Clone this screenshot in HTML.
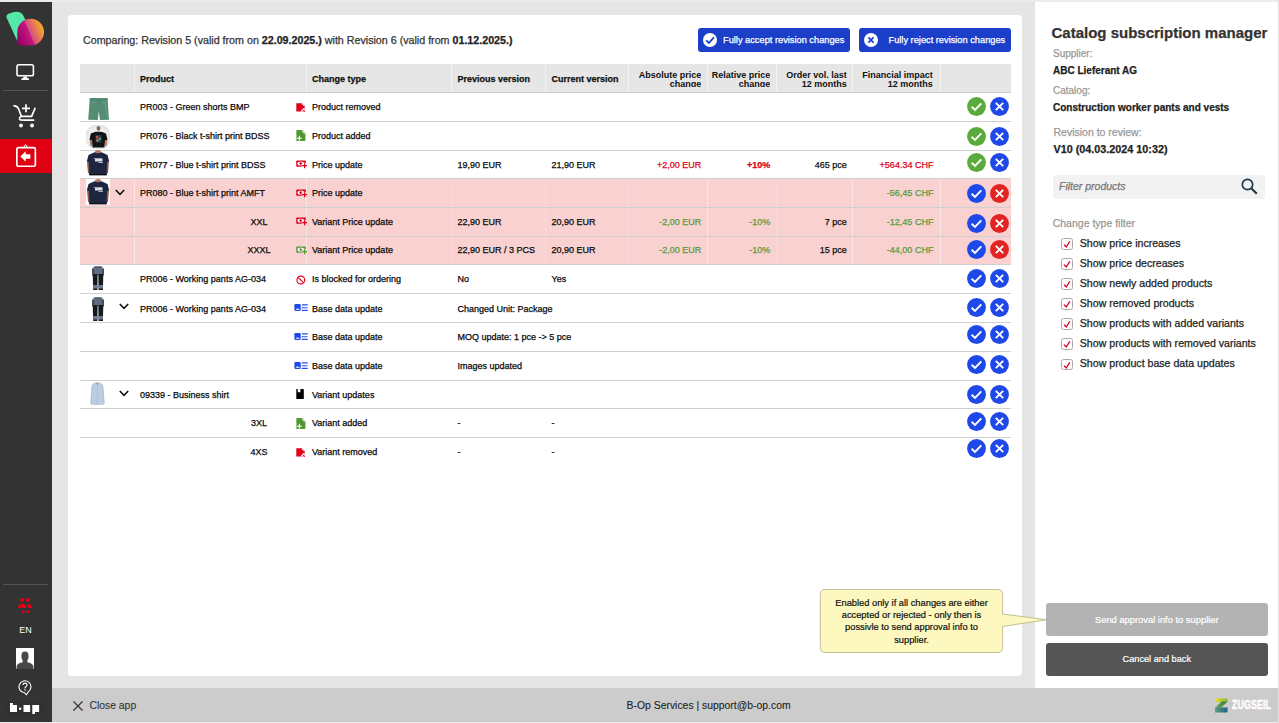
<!DOCTYPE html><html><head><meta charset="utf-8"><style>
*{box-sizing:border-box;margin:0;padding:0}
html,body{width:1279px;height:723px;overflow:hidden;background:#e5e5e5;font-family:"Liberation Sans", sans-serif;color:#222}
.a{position:absolute}
.t{position:absolute;white-space:nowrap;line-height:1;-webkit-text-stroke:0.25px currentColor}
</style></head><body><div class="a" style="left:0;top:0;width:1279px;height:2px;background:#e8ebef"></div>
<div class="a" style="left:0;top:2px;width:52px;height:720px;background:#333333"></div>
<div class="a" style="left:68px;top:15px;width:954px;height:661px;background:#fff;border-radius:4px"></div>
<div class="a" style="left:1035px;top:2px;width:243px;height:686px;background:#fff"></div>
<div class="a" style="left:52px;top:688px;width:1227px;height:34px;background:#cccccc"></div>
<div class="a" style="left:0;top:722px;width:1279px;height:1px;background:#ececec"></div>
<svg class="a" style="left:0;top:0" width="52" height="52" viewBox="0 0 52 52">
<defs><linearGradient id="lg" x1="0" y1="0.72" x2="1" y2="0.28"><stop offset="0" stop-color="#9a0066"/><stop offset="0.45" stop-color="#c4187f"/><stop offset="0.47" stop-color="#d54c84"/><stop offset="1" stop-color="#fab619"/></linearGradient></defs>
<path d="M6.5 17.5 Q6 14.5 9 13.5 L14 12 Q20 10.8 23 15 L25.5 20 L17.5 41.5 Z" fill="#52e9a9"/>
<path d="M17.3 31 A13.4 13.4 0 1 1 31 45.6 L21 45.6 Q17.3 45.6 17.3 42 Z" fill="url(#lg)"/>
</svg>
<svg class="a" style="left:15px;top:63px" width="20" height="18" viewBox="0 0 20 18">
<rect x="2" y="1.7" width="16.4" height="11" rx="1.8" fill="none" stroke="#fff" stroke-width="1.6"/>
<path d="M8.6 13.4 L11.8 13.4 L12.2 15 L14 15.5 L14 17 L6.4 17 L6.4 15.5 L8.2 15 Z" fill="#fff"/>
</svg>
<div class="a" style="left:3px;top:90px;width:45px;height:1px;background:#555"></div>
<svg class="a" style="left:13px;top:103px" width="24" height="25" viewBox="0 0 24 25">
<path d="M1 2.8 Q4.2 2.6 5.6 6 L8.4 13.3 L18.6 13.3 L22 5.4" fill="none" stroke="#fff" stroke-width="1.7" stroke-linecap="round" stroke-linejoin="round"/>
<path d="M8.4 13.3 Q6.2 14.4 6.5 16 Q6.9 17.1 8.6 17.1 L20.6 17.1" fill="none" stroke="#fff" stroke-width="1.7" stroke-linecap="round"/>
<path d="M9 5.3 L17 5.3 M13 1.3 L13 9.3" stroke="#fff" stroke-width="1.7"/>
<circle cx="8" cy="22.5" r="1.9" fill="#fff"/><circle cx="19" cy="22.5" r="1.9" fill="#fff"/>
</svg>
<div class="a" style="left:0;top:139px;width:52px;height:34px;background:#df0012"></div>
<svg class="a" style="left:15px;top:143px" width="22" height="25" viewBox="0 0 22 25">
<rect x="1.85" y="4.65" width="18.5" height="18.6" rx="1.6" fill="none" stroke="#fff" stroke-width="1.7"/>
<path d="M7.5 4.2 Q9 4 9.3 2.8 Q9.8 1.3 10.6 1.3 Q11.4 1.3 11.9 2.8 Q12.2 4 13.7 4.2 Z" fill="#fff"/>
<circle cx="10.6" cy="3.3" r="0.7" fill="#df0012"/>
<path d="M5.4 13.5 L10.7 8.2 L10.7 11.3 L15.4 11.3 L15.4 15.7 L10.7 15.7 L10.7 18.7 Z" fill="#fff"/>
</svg>
<div class="a" style="left:3px;top:584px;width:45px;height:1px;background:#555"></div>
<svg class="a" style="left:17px;top:597px" width="16" height="17" viewBox="0 0 16 17">
<circle cx="5.1" cy="3" r="2.1" fill="#e0001a"/><circle cx="10.9" cy="3" r="2.1" fill="#e0001a"/>
<path d="M1 10.9 Q1.2 6.8 5 6.8 L5.8 6.8 Q9 6.8 9.4 10.9 Z" fill="#e0001a"/>
<path d="M10.3 6.8 Q14.8 6.8 15.1 10.9 L10.9 10.9 Q10.8 8.5 10.3 6.8 Z" fill="#e0001a"/>
<path d="M6.2 14.6 L11 14.6" stroke="#e0001a" stroke-width="1.2"/>
<path d="M4.1 14.6 L6.6 12.8 L6.6 16.4 Z M13.2 14.6 L10.7 12.8 L10.7 16.4 Z" fill="#e0001a"/>
</svg>
<div class="t" style="left:19.2px;top:625.8px;font-size:9px;color:#fff;-webkit-text-stroke:0px">EN</div>
<svg class="a" style="left:16px;top:647.5px" width="18" height="21" viewBox="0 0 18 21">
<rect width="18" height="21" fill="#fff"/>
<path d="M9 3.5 Q12.6 3.5 12.6 7.8 Q12.6 11.2 11.3 12.6 L11.3 14.2 Q16 15.2 17.2 17.5 L17.6 21 L0.4 21 L0.8 17.5 Q2 15.2 6.7 14.2 L6.7 12.6 Q5.4 11.2 5.4 7.8 Q5.4 3.5 9 3.5 Z" fill="#484848"/>
</svg>
<svg class="a" style="left:0;top:696px" width="50" height="26" viewBox="0 0 50 26">
<rect x="5.5" y="5" width="38.7" height="14.5" fill="#313135"/>
<path d="M10 7 L12.9 7 L12.9 9 L17 9 L17 16 L10 16 Z" fill="#fff"/>
<circle cx="20.1" cy="12.8" r="1.25" fill="#fff"/>
<rect x="23.5" y="9" width="6.6" height="7" fill="#fff"/>
<path d="M32.3 9 L39.1 9 L39.1 16 L35 16 L35 18 L32.3 18 Z" fill="#fff"/>
</svg>
<svg class="a" style="left:17.5px;top:680px" width="15" height="16" viewBox="0 0 15 16">
<path d="M6.48 12.78 A6 6 0 1 1 10 11.99 L8.6 14.8 Z" fill="none" stroke="#fff" stroke-width="1.05" stroke-linejoin="round"/>
<path d="M5 5.1 Q5 3.1 7 3.1 Q9 3.1 9 5.1 Q9 6.2 7.8 6.8 Q7 7.2 7 8.5" fill="none" stroke="#fff" stroke-width="1.1"/>
<circle cx="7" cy="10.1" r="0.75" fill="#fff"/>
</svg>
<div class="t" style="left:83px;top:34.5px;font-size:10.7px;color:#333">Comparing: Revision 5 (valid from on <b style="color:#222">22.09.2025.)</b> with Revision 6 (valid from <b style="color:#222">01.12.2025.)</b></div>
<div class="a" style="left:698px;top:28px;width:152px;height:23.5px;background:#1b3fc9;border-radius:3px"></div>
<svg class="a" style="left:702.5px;top:32.8px" width="14" height="14" viewBox="0 0 14 14"><circle cx="7" cy="7" r="7" fill="#fff"/><path d="M3.2 7.3 L5.9 10 L10.9 4.4" fill="none" stroke="#1b3fc9" stroke-width="1.8"/></svg>
<div class="t" style="left:723px;top:36.1px;font-size:9.25px;color:#fff">Fully accept revision changes</div>
<div class="a" style="left:859px;top:28px;width:152px;height:23.5px;background:#1b3fc9;border-radius:3px"></div>
<svg class="a" style="left:863.5px;top:32.8px" width="14" height="14" viewBox="0 0 14 14"><circle cx="7" cy="7" r="7" fill="#fff"/><path d="M4.4 4.4 L9.6 9.6 M9.6 4.4 L4.4 9.6" fill="none" stroke="#1b3fc9" stroke-width="1.7"/></svg>
<div class="t" style="left:888.5px;top:36.1px;font-size:9.25px;color:#fff">Fully reject revision changes</div>
<div class="a" style="left:80px;top:64px;width:931px;height:28.5px;background:#e6e6e6"></div>
<div class="a" style="left:80px;top:92px;width:931px;height:1px;background:#cfcfcf"></div>
<div class="a" style="left:133.7px;top:64px;width:1px;height:28px;background:#f2f2f2"></div>
<div class="a" style="left:306.2px;top:64px;width:1px;height:28px;background:#f2f2f2"></div>
<div class="a" style="left:451.2px;top:64px;width:1px;height:28px;background:#f2f2f2"></div>
<div class="a" style="left:544.7px;top:64px;width:1px;height:28px;background:#f2f2f2"></div>
<div class="a" style="left:627.5px;top:64px;width:1px;height:28px;background:#f2f2f2"></div>
<div class="a" style="left:707.1px;top:64px;width:1px;height:28px;background:#f2f2f2"></div>
<div class="a" style="left:775.9px;top:64px;width:1px;height:28px;background:#f2f2f2"></div>
<div class="a" style="left:852.0px;top:64px;width:1px;height:28px;background:#f2f2f2"></div>
<div class="a" style="left:940.2px;top:64px;width:1px;height:28px;background:#f2f2f2"></div>
<div class="t" style="left:140px;top:74.8px;font-size:9px;font-weight:700;color:#111">Product</div>
<div class="t" style="left:312px;top:74.8px;font-size:9px;font-weight:700;color:#111">Change type</div>
<div class="t" style="left:457.5px;top:74.8px;font-size:9px;font-weight:700;color:#111">Previous version</div>
<div class="t" style="left:551.5px;top:74.8px;font-size:9px;font-weight:700;color:#111">Current version</div>
<div class="a" style="left:581.3px;top:70.7px;width:120px;height:16.5px;overflow:hidden;text-align:right;font-size:9px;font-weight:700;color:#111;line-height:9.6px">Absolute price<br>change</div>
<div class="a" style="left:650.2px;top:70.7px;width:120px;height:16.5px;overflow:hidden;text-align:right;font-size:9px;font-weight:700;color:#111;line-height:9.6px">Relative price<br>change</div>
<div class="a" style="left:726.7px;top:70.7px;width:120px;height:16.5px;overflow:hidden;text-align:right;font-size:9px;font-weight:700;color:#111;line-height:9.6px">Order vol. last<br>12 months</div>
<div class="a" style="left:812.8px;top:70.7px;width:120px;height:16.5px;overflow:hidden;text-align:right;font-size:9px;font-weight:700;color:#111;line-height:9.6px">Financial impact<br>12 months</div>
<div class="a" style="left:80px;top:178.6px;width:931px;height:28.7px;background:#f8d1d0"></div>
<div class="a" style="left:133.7px;top:179.6px;width:1px;height:27.7px;background:#fbe4e4"></div>
<div class="a" style="left:306.2px;top:179.6px;width:1px;height:27.7px;background:#fbe4e4"></div>
<div class="a" style="left:451.2px;top:179.6px;width:1px;height:27.7px;background:#f9dada"></div>
<div class="a" style="left:544.7px;top:179.6px;width:1px;height:27.7px;background:#f9dada"></div>
<div class="a" style="left:627.5px;top:179.6px;width:1px;height:27.7px;background:#f9dada"></div>
<div class="a" style="left:707.1px;top:179.6px;width:1px;height:27.7px;background:#fbe4e4"></div>
<div class="a" style="left:775.9px;top:179.6px;width:1px;height:27.7px;background:#f9dada"></div>
<div class="a" style="left:852.0px;top:179.6px;width:1px;height:27.7px;background:#fbe4e4"></div>
<div class="a" style="left:940.2px;top:179.6px;width:1px;height:27.7px;background:#fbe4e4"></div>
<div class="a" style="left:80px;top:207.3px;width:931px;height:28.7px;background:#f8d1d0"></div>
<div class="a" style="left:133.7px;top:208.3px;width:1px;height:27.7px;background:#fbe4e4"></div>
<div class="a" style="left:306.2px;top:208.3px;width:1px;height:27.7px;background:#fbe4e4"></div>
<div class="a" style="left:451.2px;top:208.3px;width:1px;height:27.7px;background:#f9dada"></div>
<div class="a" style="left:544.7px;top:208.3px;width:1px;height:27.7px;background:#f9dada"></div>
<div class="a" style="left:627.5px;top:208.3px;width:1px;height:27.7px;background:#f9dada"></div>
<div class="a" style="left:707.1px;top:208.3px;width:1px;height:27.7px;background:#fbe4e4"></div>
<div class="a" style="left:775.9px;top:208.3px;width:1px;height:27.7px;background:#f9dada"></div>
<div class="a" style="left:852.0px;top:208.3px;width:1px;height:27.7px;background:#fbe4e4"></div>
<div class="a" style="left:940.2px;top:208.3px;width:1px;height:27.7px;background:#fbe4e4"></div>
<div class="a" style="left:80px;top:236.0px;width:931px;height:28.5px;background:#f8d1d0"></div>
<div class="a" style="left:133.7px;top:237.0px;width:1px;height:27.5px;background:#fbe4e4"></div>
<div class="a" style="left:306.2px;top:237.0px;width:1px;height:27.5px;background:#fbe4e4"></div>
<div class="a" style="left:451.2px;top:237.0px;width:1px;height:27.5px;background:#f9dada"></div>
<div class="a" style="left:544.7px;top:237.0px;width:1px;height:27.5px;background:#f9dada"></div>
<div class="a" style="left:627.5px;top:237.0px;width:1px;height:27.5px;background:#f9dada"></div>
<div class="a" style="left:707.1px;top:237.0px;width:1px;height:27.5px;background:#fbe4e4"></div>
<div class="a" style="left:775.9px;top:237.0px;width:1px;height:27.5px;background:#f9dada"></div>
<div class="a" style="left:852.0px;top:237.0px;width:1px;height:27.5px;background:#fbe4e4"></div>
<div class="a" style="left:940.2px;top:237.0px;width:1px;height:27.5px;background:#fbe4e4"></div>
<div class="a" style="left:80px;top:120.9px;width:931px;height:1px;background:#cfcfcf"></div>
<div class="a" style="left:80px;top:149.6px;width:931px;height:1px;background:#cfcfcf"></div>
<div class="a" style="left:80px;top:178.1px;width:931px;height:1px;background:#cfcfcf"></div>
<div class="a" style="left:80px;top:206.8px;width:931px;height:1px;background:#cfcfcf"></div>
<div class="a" style="left:80px;top:235.5px;width:931px;height:1px;background:#cfcfcf"></div>
<div class="a" style="left:80px;top:264.0px;width:931px;height:1px;background:#cfcfcf"></div>
<div class="a" style="left:80px;top:293.4px;width:931px;height:1px;background:#cfcfcf"></div>
<div class="a" style="left:80px;top:322.3px;width:931px;height:1px;background:#cfcfcf"></div>
<div class="a" style="left:80px;top:350.8px;width:931px;height:1px;background:#cfcfcf"></div>
<div class="a" style="left:80px;top:379.5px;width:931px;height:1px;background:#cfcfcf"></div>
<div class="a" style="left:80px;top:408.1px;width:931px;height:1px;background:#cfcfcf"></div>
<div class="a" style="left:80px;top:437.0px;width:931px;height:1px;background:#cfcfcf"></div>
<svg class="a" style="left:88px;top:98px" width="22" height="23" viewBox="0 0 22 23"><path d="M1.8 0.3 L19.5 0.3 L21 21.8 L12 22 L10.8 13.5 L9.8 22 L0.2 21.8 Z" fill="#558c74"/><path d="M1.8 0.3 L19.5 0.3 L19.6 2.2 L1.7 2.2 Z" fill="#4e8670"/><path d="M10.6 2.2 L10.6 12" stroke="#4a8068" stroke-width="0.6"/><path d="M3 4 L7 4.5 M18 4 L14 4.5" stroke="#6ea48b" stroke-width="0.8"/><path d="M17 5 L19.5 20" stroke="#6aa088" stroke-width="1"/></svg>
<div class="t" style="left:140px;top:103.2px;font-size:9px;font-weight:400;color:#0a0a0a">PR003 - Green shorts BMP</div>
<svg class="a" style="left:296px;top:103.4px" width="10" height="10" viewBox="0 0 10 10"><path d="M0.3 0.2 L5.8 0.2 L8.8 3.2 L8.8 5.3 L7.2 5.3 L5.3 7.2 L5.3 8.6 L0.3 8.6 Z" fill="#e1001a"/><path d="M5.7 0.9 L8.2 3.4" stroke="#fff" stroke-width="0.7"/><path d="M6.6 6.6 L8.8 8.8 M8.8 6.6 L6.6 8.8" stroke="#e1001a" stroke-width="1"/></svg>
<div class="t" style="left:312px;top:103.2px;font-size:9px;font-weight:400;color:#0a0a0a">Product removed</div>
<svg class="a" style="left:967.4px;top:97.4px" width="19" height="19" viewBox="0 0 19 19"><circle cx="9.5" cy="9.5" r="9.4" fill="#5aab3c"/><path d="M4.6 9.8 L8 13 L14.3 6.3" fill="none" stroke="#fff" stroke-width="1.9"/></svg>
<svg class="a" style="left:990px;top:97.4px" width="19" height="19" viewBox="0 0 19 19"><circle cx="9.5" cy="9.5" r="9.4" fill="#1f48e8"/><path d="M5.8 5.8 L13.2 13.2 M13.2 5.8 L5.8 13.2" fill="none" stroke="#fff" stroke-width="1.9"/></svg>
<svg class="a" style="left:86px;top:124.5px" width="24" height="24" viewBox="0 0 24 24"><defs><radialGradient id="mg" cx="0.5" cy="0.5" r="0.6"><stop offset="0.5" stop-color="#f2f2f2"/><stop offset="1" stop-color="#dedede"/></radialGradient></defs><rect x="0" y="0" width="24" height="24" rx="9" fill="url(#mg)"/><ellipse cx="12.5" cy="3.6" rx="1.8" ry="2.2" fill="#8a6350"/><path d="M10.6 2.6 Q12.5 0.6 14.4 2.6 L14.2 1.8 Q12.5 0.5 10.8 1.8 Z" fill="#1a1410"/><path d="M4.8 8.5 L9.5 6.8 L15.5 6.8 L20 8.5 L21.5 14.8 L19 15.2 L18.5 22.5 L6.5 22.5 L6 15.2 L3.5 14.8 Z" fill="#121212"/><rect x="9.5" y="10" width="6" height="7.5" fill="#2a3a5a"/><rect x="10" y="11" width="2.2" height="2.5" fill="#d04a40"/><rect x="12.8" y="12.5" width="2.2" height="2.5" fill="#3a9a6a"/><rect x="10.5" y="14.5" width="2" height="2" fill="#c0a030"/><path d="M3.6 15 L4.5 21 L6 21 L6 15.2 Z M19 15.2 L19.2 21 L20.6 21 L21.4 15 Z" fill="#a87a62"/></svg>
<div class="t" style="left:140px;top:131.9px;font-size:9px;font-weight:400;color:#0a0a0a">PR076 - Black t-shirt print BDSS</div>
<svg class="a" style="left:296px;top:130.2px" width="10" height="11" viewBox="0 0 10 11"><path d="M0.4 0.5 Q0.4 0 1 0 L6 0 L9.4 3.4 L9.4 10.4 Q9.4 11 8.8 11 L1 11 Q0.4 11 0.4 10.4 Z" fill="#4f962f"/><path d="M5.8 1 L8.7 3.9" stroke="#fff" stroke-width="0.8"/><path d="M0.8 8.2 L6 8.2 M3.4 5.7 L3.4 10.8" stroke="#fff" stroke-width="1.1"/></svg>
<div class="t" style="left:312px;top:131.9px;font-size:9px;font-weight:400;color:#0a0a0a">Product added</div>
<svg class="a" style="left:967.4px;top:126.5px" width="19" height="19" viewBox="0 0 19 19"><circle cx="9.5" cy="9.5" r="9.4" fill="#5aab3c"/><path d="M4.6 9.8 L8 13 L14.3 6.3" fill="none" stroke="#fff" stroke-width="1.9"/></svg>
<svg class="a" style="left:990px;top:126.5px" width="19" height="19" viewBox="0 0 19 19"><circle cx="9.5" cy="9.5" r="9.4" fill="#1f48e8"/><path d="M5.8 5.8 L13.2 13.2 M13.2 5.8 L5.8 13.2" fill="none" stroke="#fff" stroke-width="1.9"/></svg>
<svg class="a" style="left:86px;top:149.5px" width="24" height="26" viewBox="0 0 24 26"><ellipse cx="12" cy="2" rx="3" ry="2" fill="#b07a60"/><path d="M2.5 5 L8.5 2.3 Q12 4 15.5 2.3 L21.5 5 L23.2 11.5 L21 12.3 L21 25.2 L3 25.2 L3 12.3 L0.8 11.5 Z" fill="#1d2541"/><path d="M1 11.6 L3 12.3 L3.4 23.5 L2 23 Z M23 11.6 L21 12.3 L20.6 23.5 L22 23 Z" fill="#8a5a48"/><rect x="9" y="8.3" width="7.5" height="3.2" fill="#d9dde6"/><rect x="7.5" y="8" width="1.6" height="0.8" fill="#aab"/><rect x="12.5" y="12" width="4.5" height="1" fill="#aab2c4"/><rect x="4" y="24" width="16" height="1.2" fill="#111"/></svg>
<div class="t" style="left:140px;top:160.5px;font-size:9px;font-weight:400;color:#0a0a0a">PR077 - Blue t-shirt print BDSS</div>
<svg class="a" style="left:296px;top:160.0px" width="12" height="10" viewBox="0 0 12 10"><rect x="0.3" y="0.4" width="9.6" height="6.4" rx="0.9" fill="#e1001a"/><rect x="1.6" y="1.7" width="6.4" height="3.8" rx="1.6" fill="#fff"/><circle cx="4.7" cy="3.6" r="1.3" fill="#e1001a"/><circle cx="8.6" cy="5.7" r="2.9" fill="#fff"/><path d="M6.2 5.7 L11 5.7 M8.6 3.3 L8.6 8.2" stroke="#e1001a" stroke-width="1.2"/></svg>
<div class="t" style="left:312px;top:160.5px;font-size:9px;font-weight:400;color:#0a0a0a">Price update</div>
<div class="t" style="left:457.5px;top:160.5px;font-size:9px;font-weight:400;color:#0a0a0a">19,90 EUR</div>
<div class="t" style="left:551.5px;top:160.5px;font-size:9px;font-weight:400;color:#0a0a0a">21,90 EUR</div>
<div class="t" style="left:551.2px;width:150px;text-align:right;top:160.5px;font-size:9px;font-weight:400;color:#e1001a">+2,00 EUR</div>
<div class="t" style="left:620.2px;width:150px;text-align:right;top:160.5px;font-size:9px;font-weight:700;color:#e1001a">+10%</div>
<div class="t" style="left:696.7px;width:150px;text-align:right;top:160.5px;font-size:9px;font-weight:400;color:#111">465 pce</div>
<div class="t" style="left:783.4px;width:150px;text-align:right;top:160.5px;font-size:9px;font-weight:400;color:#e1001a">+564.34 CHF</div>
<svg class="a" style="left:967.4px;top:153.3px" width="19" height="19" viewBox="0 0 19 19"><circle cx="9.5" cy="9.5" r="9.4" fill="#5aab3c"/><path d="M4.6 9.8 L8 13 L14.3 6.3" fill="none" stroke="#fff" stroke-width="1.9"/></svg>
<svg class="a" style="left:990px;top:153.3px" width="19" height="19" viewBox="0 0 19 19"><circle cx="9.5" cy="9.5" r="9.4" fill="#1f48e8"/><path d="M5.8 5.8 L13.2 13.2 M13.2 5.8 L5.8 13.2" fill="none" stroke="#fff" stroke-width="1.9"/></svg>
<svg class="a" style="left:86px;top:179.2px" width="24" height="26" viewBox="0 0 24 26"><rect x="0" y="0" width="24" height="26" fill="#fff"/><ellipse cx="12" cy="2" rx="3" ry="2" fill="#b07a60"/><path d="M2.5 5 L8.5 2.3 Q12 4 15.5 2.3 L21.5 5 L23.2 11.5 L21 12.3 L21 25.2 L3 25.2 L3 12.3 L0.8 11.5 Z" fill="#1d2541"/><path d="M1 11.6 L3 12.3 L3.4 23.5 L2 23 Z M23 11.6 L21 12.3 L20.6 23.5 L22 23 Z" fill="#8a5a48"/><rect x="9" y="8.3" width="7.5" height="3.2" fill="#d9dde6"/><rect x="7.5" y="8" width="1.6" height="0.8" fill="#aab"/><rect x="12.5" y="12" width="4.5" height="1" fill="#aab2c4"/><rect x="4" y="24" width="16" height="1.2" fill="#111"/></svg>
<svg class="a" style="left:115.0px;top:189.3px" width="10" height="7" viewBox="0 0 10 7"><path d="M0.8 1 L5 5.3 L9.2 1" fill="none" stroke="#111" stroke-width="1.6"/></svg>
<div class="t" style="left:140px;top:189.1px;font-size:9px;font-weight:400;color:#0a0a0a">PR080 - Blue t-shirt print AMFT</div>
<svg class="a" style="left:296px;top:188.6px" width="12" height="10" viewBox="0 0 12 10"><rect x="0.3" y="0.4" width="9.6" height="6.4" rx="0.9" fill="#e1001a"/><rect x="1.6" y="1.7" width="6.4" height="3.8" rx="1.6" fill="#fff"/><circle cx="4.7" cy="3.6" r="1.3" fill="#e1001a"/><circle cx="8.6" cy="5.7" r="2.9" fill="#f8d1d0"/><path d="M6.2 5.7 L11 5.7 M8.6 3.3 L8.6 8.2" stroke="#e1001a" stroke-width="1.2"/></svg>
<div class="t" style="left:312px;top:189.1px;font-size:9px;font-weight:400;color:#0a0a0a">Price update</div>
<div class="t" style="left:783.4px;width:150px;text-align:right;top:189.1px;font-size:9px;font-weight:400;color:#5a9b3b">-56,45 CHF</div>
<svg class="a" style="left:967.4px;top:183.8px" width="19" height="19" viewBox="0 0 19 19"><circle cx="9.5" cy="9.5" r="9.4" fill="#1f48e8"/><path d="M4.6 9.8 L8 13 L14.3 6.3" fill="none" stroke="#fff" stroke-width="1.9"/></svg>
<svg class="a" style="left:990px;top:183.8px" width="19" height="19" viewBox="0 0 19 19"><circle cx="9.5" cy="9.5" r="9.4" fill="#e32222"/><path d="M5.8 5.8 L13.2 13.2 M13.2 5.8 L5.8 13.2" fill="none" stroke="#fff" stroke-width="1.9"/></svg>
<div class="t" style="left:209px;width:100px;text-align:center;top:217.8px;font-size:9px;color:#0a0a0a">XXL</div>
<svg class="a" style="left:296px;top:217.3px" width="12" height="10" viewBox="0 0 12 10"><rect x="0.3" y="0.4" width="9.6" height="6.4" rx="0.9" fill="#e1001a"/><rect x="1.6" y="1.7" width="6.4" height="3.8" rx="1.6" fill="#fff"/><circle cx="4.7" cy="3.6" r="1.3" fill="#e1001a"/><circle cx="8.6" cy="5.7" r="2.9" fill="#f8d1d0"/><path d="M6.2 5.7 L11 5.7 M8.6 3.3 L8.6 8.2" stroke="#e1001a" stroke-width="1.2"/></svg>
<div class="t" style="left:312px;top:217.8px;font-size:9px;font-weight:400;color:#0a0a0a">Variant Price update</div>
<div class="t" style="left:457.5px;top:217.8px;font-size:9px;font-weight:400;color:#0a0a0a">22,90 EUR</div>
<div class="t" style="left:551.5px;top:217.8px;font-size:9px;font-weight:400;color:#0a0a0a">20,90 EUR</div>
<div class="t" style="left:551.2px;width:150px;text-align:right;top:217.8px;font-size:9px;font-weight:400;color:#5a9b3b">-2,00 EUR</div>
<div class="t" style="left:620.2px;width:150px;text-align:right;top:217.8px;font-size:9px;font-weight:400;color:#5a9b3b">-10%</div>
<div class="t" style="left:696.7px;width:150px;text-align:right;top:217.8px;font-size:9px;font-weight:400;color:#111">7 pce</div>
<div class="t" style="left:783.4px;width:150px;text-align:right;top:217.8px;font-size:9px;font-weight:400;color:#5a9b3b">-12,45 CHF</div>
<svg class="a" style="left:967.4px;top:213.8px" width="19" height="19" viewBox="0 0 19 19"><circle cx="9.5" cy="9.5" r="9.4" fill="#1f48e8"/><path d="M4.6 9.8 L8 13 L14.3 6.3" fill="none" stroke="#fff" stroke-width="1.9"/></svg>
<svg class="a" style="left:990px;top:213.8px" width="19" height="19" viewBox="0 0 19 19"><circle cx="9.5" cy="9.5" r="9.4" fill="#e32222"/><path d="M5.8 5.8 L13.2 13.2 M13.2 5.8 L5.8 13.2" fill="none" stroke="#fff" stroke-width="1.9"/></svg>
<div class="t" style="left:209px;width:100px;text-align:center;top:246.4px;font-size:9px;color:#0a0a0a">XXXL</div>
<svg class="a" style="left:296px;top:245.9px" width="12" height="10" viewBox="0 0 12 10"><rect x="0.3" y="0.4" width="9.6" height="6.4" rx="0.9" fill="#5a9b3b"/><rect x="1.6" y="1.7" width="6.4" height="3.8" rx="1.6" fill="#fff"/><circle cx="4.7" cy="3.6" r="1.3" fill="#5a9b3b"/><circle cx="8.6" cy="5.7" r="2.9" fill="#f8d1d0"/><path d="M6.2 5.7 L11 5.7 M8.6 3.3 L8.6 8.2" stroke="#5a9b3b" stroke-width="1.2"/></svg>
<div class="t" style="left:312px;top:246.4px;font-size:9px;font-weight:400;color:#0a0a0a">Variant Price update</div>
<div class="t" style="left:457.5px;top:246.4px;font-size:9px;font-weight:400;color:#0a0a0a">22,90 EUR / 3 PCS</div>
<div class="t" style="left:551.5px;top:246.4px;font-size:9px;font-weight:400;color:#0a0a0a">20,90 EUR</div>
<div class="t" style="left:551.2px;width:150px;text-align:right;top:246.4px;font-size:9px;font-weight:400;color:#5a9b3b">-2,00 EUR</div>
<div class="t" style="left:620.2px;width:150px;text-align:right;top:246.4px;font-size:9px;font-weight:400;color:#5a9b3b">-10%</div>
<div class="t" style="left:696.7px;width:150px;text-align:right;top:246.4px;font-size:9px;font-weight:400;color:#111">15 pce</div>
<div class="t" style="left:783.4px;width:150px;text-align:right;top:246.4px;font-size:9px;font-weight:400;color:#5a9b3b">-44,00 CHF</div>
<svg class="a" style="left:967.4px;top:240.0px" width="19" height="19" viewBox="0 0 19 19"><circle cx="9.5" cy="9.5" r="9.4" fill="#1f48e8"/><path d="M4.6 9.8 L8 13 L14.3 6.3" fill="none" stroke="#fff" stroke-width="1.9"/></svg>
<svg class="a" style="left:990px;top:240.0px" width="19" height="19" viewBox="0 0 19 19"><circle cx="9.5" cy="9.5" r="9.4" fill="#e32222"/><path d="M5.8 5.8 L13.2 13.2 M13.2 5.8 L5.8 13.2" fill="none" stroke="#fff" stroke-width="1.9"/></svg>
<svg class="a" style="left:91.5px;top:265.7px" width="12" height="25" viewBox="0 0 12 25"><path d="M1.5 0.5 L10.5 0.5 L11.3 9 L0.7 9 Z" fill="#5d6c82"/><path d="M0.7 8 L5.6 8 L5.4 24 L1.2 24 Z M6.3 8 L11.3 8 L10.9 24 L6.6 24 Z" fill="#16191d"/><path d="M0.1 2.5 L1.6 2.5 L1.7 9.5 L0.3 9.5 Z M10.4 2.5 L11.9 2.5 L11.8 9.5 L10.4 9.5 Z" fill="#2a2f36"/><path d="M1 19 L5.4 19 L5.4 22.6 L1.1 22.6 Z M6.6 19 L11 19 L10.9 22.6 L6.6 22.6 Z" fill="#6a7891"/><path d="M3 0.5 L9 0.5 L9 1.4 L3 1.4 Z" fill="#3c4452"/></svg>
<div class="t" style="left:140px;top:275.4px;font-size:9px;font-weight:400;color:#0a0a0a">PR006 - Working pants AG-034</div>
<svg class="a" style="left:296px;top:274.7px" width="10" height="10" viewBox="0 0 10 10"><circle cx="4.8" cy="5" r="3.9" fill="none" stroke="#e1001a" stroke-width="1.1"/><path d="M2.1 2.3 L7.5 7.7" stroke="#e1001a" stroke-width="1.1"/></svg>
<div class="t" style="left:312px;top:275.4px;font-size:9px;font-weight:400;color:#0a0a0a">Is blocked for ordering</div>
<div class="t" style="left:457.5px;top:275.4px;font-size:9px;font-weight:400;color:#0a0a0a">No</div>
<div class="t" style="left:551.5px;top:275.4px;font-size:9px;font-weight:400;color:#0a0a0a">Yes</div>
<svg class="a" style="left:967.4px;top:269.1px" width="19" height="19" viewBox="0 0 19 19"><circle cx="9.5" cy="9.5" r="9.4" fill="#1f48e8"/><path d="M4.6 9.8 L8 13 L14.3 6.3" fill="none" stroke="#fff" stroke-width="1.9"/></svg>
<svg class="a" style="left:990px;top:269.1px" width="19" height="19" viewBox="0 0 19 19"><circle cx="9.5" cy="9.5" r="9.4" fill="#1f48e8"/><path d="M5.8 5.8 L13.2 13.2 M13.2 5.8 L5.8 13.2" fill="none" stroke="#fff" stroke-width="1.9"/></svg>
<svg class="a" style="left:91.5px;top:296.9px" width="12" height="25" viewBox="0 0 12 25"><path d="M1.5 0.5 L10.5 0.5 L11.3 9 L0.7 9 Z" fill="#5d6c82"/><path d="M0.7 8 L5.6 8 L5.4 24 L1.2 24 Z M6.3 8 L11.3 8 L10.9 24 L6.6 24 Z" fill="#16191d"/><path d="M0.1 2.5 L1.6 2.5 L1.7 9.5 L0.3 9.5 Z M10.4 2.5 L11.9 2.5 L11.8 9.5 L10.4 9.5 Z" fill="#2a2f36"/><path d="M1 19 L5.4 19 L5.4 22.6 L1.1 22.6 Z M6.6 19 L11 19 L10.9 22.6 L6.6 22.6 Z" fill="#6a7891"/><path d="M3 0.5 L9 0.5 L9 1.4 L3 1.4 Z" fill="#3c4452"/></svg>
<svg class="a" style="left:119.0px;top:303.1px" width="10" height="7" viewBox="0 0 10 7"><path d="M0.8 1 L5 5.3 L9.2 1" fill="none" stroke="#111" stroke-width="1.6"/></svg>
<div class="t" style="left:140px;top:304.6px;font-size:9px;font-weight:400;color:#0a0a0a">PR006 - Working pants AG-034</div>
<svg class="a" style="left:293.5px;top:304.4px" width="14" height="8" viewBox="0 0 14 8"><rect x="0.4" y="0.1" width="6.3" height="6.8" rx="1.1" fill="#1f48e8"/><path d="M1.5 5.8 L3.2 4.2 L4.3 5 L5 4.4 L5.8 5.8 Z" fill="#fff"/><path d="M8.3 0.9 L13.3 0.9 M8.1 3.7 L13.1 3.7 M8.1 6.4 L13.3 6.4" stroke="#2350ea" stroke-width="1.1" stroke-linecap="round"/></svg>
<div class="t" style="left:312px;top:304.6px;font-size:9px;font-weight:400;color:#0a0a0a">Base data update</div>
<div class="t" style="left:457.5px;top:304.6px;font-size:9px;font-weight:400;color:#0a0a0a">Changed Unit: Package</div>
<svg class="a" style="left:967.4px;top:298.4px" width="19" height="19" viewBox="0 0 19 19"><circle cx="9.5" cy="9.5" r="9.4" fill="#1f48e8"/><path d="M4.6 9.8 L8 13 L14.3 6.3" fill="none" stroke="#fff" stroke-width="1.9"/></svg>
<svg class="a" style="left:990px;top:298.4px" width="19" height="19" viewBox="0 0 19 19"><circle cx="9.5" cy="9.5" r="9.4" fill="#1f48e8"/><path d="M5.8 5.8 L13.2 13.2 M13.2 5.8 L5.8 13.2" fill="none" stroke="#fff" stroke-width="1.9"/></svg>
<svg class="a" style="left:293.5px;top:333.1px" width="14" height="8" viewBox="0 0 14 8"><rect x="0.4" y="0.1" width="6.3" height="6.8" rx="1.1" fill="#1f48e8"/><path d="M1.5 5.8 L3.2 4.2 L4.3 5 L5 4.4 L5.8 5.8 Z" fill="#fff"/><path d="M8.3 0.9 L13.3 0.9 M8.1 3.7 L13.1 3.7 M8.1 6.4 L13.3 6.4" stroke="#2350ea" stroke-width="1.1" stroke-linecap="round"/></svg>
<div class="t" style="left:312px;top:333.2px;font-size:9px;font-weight:400;color:#0a0a0a">Base data update</div>
<div class="t" style="left:457.5px;top:333.2px;font-size:9px;font-weight:400;color:#0a0a0a">MOQ update: 1 pce -&gt; 5 pce</div>
<svg class="a" style="left:967.4px;top:324.8px" width="19" height="19" viewBox="0 0 19 19"><circle cx="9.5" cy="9.5" r="9.4" fill="#1f48e8"/><path d="M4.6 9.8 L8 13 L14.3 6.3" fill="none" stroke="#fff" stroke-width="1.9"/></svg>
<svg class="a" style="left:990px;top:324.8px" width="19" height="19" viewBox="0 0 19 19"><circle cx="9.5" cy="9.5" r="9.4" fill="#1f48e8"/><path d="M5.8 5.8 L13.2 13.2 M13.2 5.8 L5.8 13.2" fill="none" stroke="#fff" stroke-width="1.9"/></svg>
<svg class="a" style="left:293.5px;top:361.6px" width="14" height="8" viewBox="0 0 14 8"><rect x="0.4" y="0.1" width="6.3" height="6.8" rx="1.1" fill="#1f48e8"/><path d="M1.5 5.8 L3.2 4.2 L4.3 5 L5 4.4 L5.8 5.8 Z" fill="#fff"/><path d="M8.3 0.9 L13.3 0.9 M8.1 3.7 L13.1 3.7 M8.1 6.4 L13.3 6.4" stroke="#2350ea" stroke-width="1.1" stroke-linecap="round"/></svg>
<div class="t" style="left:312px;top:361.8px;font-size:9px;font-weight:400;color:#0a0a0a">Base data update</div>
<div class="t" style="left:457.5px;top:361.8px;font-size:9px;font-weight:400;color:#0a0a0a">Images updated</div>
<svg class="a" style="left:967.4px;top:355.2px" width="19" height="19" viewBox="0 0 19 19"><circle cx="9.5" cy="9.5" r="9.4" fill="#1f48e8"/><path d="M4.6 9.8 L8 13 L14.3 6.3" fill="none" stroke="#fff" stroke-width="1.9"/></svg>
<svg class="a" style="left:990px;top:355.2px" width="19" height="19" viewBox="0 0 19 19"><circle cx="9.5" cy="9.5" r="9.4" fill="#1f48e8"/><path d="M5.8 5.8 L13.2 13.2 M13.2 5.8 L5.8 13.2" fill="none" stroke="#fff" stroke-width="1.9"/></svg>
<svg class="a" style="left:90px;top:382px" width="15" height="24" viewBox="0 0 15 24"><path d="M5 0.3 L7.2 1.3 L9.6 0.3 L13 2.6 L14.8 22 L13 22.8 L12 23 L3 23 L2 22.8 L0.2 22 L1.8 2.6 Z" fill="#bccde1"/><path d="M7.3 1.5 L7.3 22.8" stroke="#a9bdd6" stroke-width="0.6"/><path d="M2.2 4 L1.2 21.5 M12.8 4 L13.8 21.5" stroke="#a5b8d0" stroke-width="0.6"/><path d="M6.6 0.5 L8 0.5 L7.6 2.6 L7 2.6 Z" fill="#c84a5a"/></svg>
<svg class="a" style="left:119.0px;top:390.3px" width="10" height="7" viewBox="0 0 10 7"><path d="M0.8 1 L5 5.3 L9.2 1" fill="none" stroke="#111" stroke-width="1.6"/></svg>
<div class="t" style="left:140px;top:390.5px;font-size:9px;font-weight:400;color:#0a0a0a">09339 - Business shirt</div>
<svg class="a" style="left:296px;top:388.5px" width="8" height="11" viewBox="0 0 8 11"><path d="M0.3 0.6 Q0.3 0.1 0.9 0.1 L1.8 0.1 L1.8 3.2 L4.4 3.2 L4.4 0.1 L7.2 0.1 Q7.8 0.1 7.8 0.7 L7.8 9.4 Q7.8 10 7.2 10 L1 10 Q0.3 10 0.3 9.4 Z" fill="#000"/></svg>
<div class="t" style="left:312px;top:390.5px;font-size:9px;font-weight:400;color:#0a0a0a">Variant updates</div>
<svg class="a" style="left:967.4px;top:385.0px" width="19" height="19" viewBox="0 0 19 19"><circle cx="9.5" cy="9.5" r="9.4" fill="#1f48e8"/><path d="M4.6 9.8 L8 13 L14.3 6.3" fill="none" stroke="#fff" stroke-width="1.9"/></svg>
<svg class="a" style="left:990px;top:385.0px" width="19" height="19" viewBox="0 0 19 19"><circle cx="9.5" cy="9.5" r="9.4" fill="#1f48e8"/><path d="M5.8 5.8 L13.2 13.2 M13.2 5.8 L5.8 13.2" fill="none" stroke="#fff" stroke-width="1.9"/></svg>
<div class="t" style="left:209px;width:100px;text-align:center;top:419.2px;font-size:9px;color:#0a0a0a">3XL</div>
<svg class="a" style="left:296px;top:417.6px" width="10" height="11" viewBox="0 0 10 11"><path d="M0.4 0.5 Q0.4 0 1 0 L6 0 L9.4 3.4 L9.4 10.4 Q9.4 11 8.8 11 L1 11 Q0.4 11 0.4 10.4 Z" fill="#4f962f"/><path d="M5.8 1 L8.7 3.9" stroke="#fff" stroke-width="0.8"/><path d="M0.8 8.2 L6 8.2 M3.4 5.7 L3.4 10.8" stroke="#fff" stroke-width="1.1"/></svg>
<div class="t" style="left:312px;top:419.2px;font-size:9px;font-weight:400;color:#0a0a0a">Variant added</div>
<div class="t" style="left:457.5px;top:419.2px;font-size:9px;font-weight:400;color:#0a0a0a">-</div>
<div class="t" style="left:551.5px;top:419.2px;font-size:9px;font-weight:400;color:#0a0a0a">-</div>
<svg class="a" style="left:967.4px;top:411.7px" width="19" height="19" viewBox="0 0 19 19"><circle cx="9.5" cy="9.5" r="9.4" fill="#1f48e8"/><path d="M4.6 9.8 L8 13 L14.3 6.3" fill="none" stroke="#fff" stroke-width="1.9"/></svg>
<svg class="a" style="left:990px;top:411.7px" width="19" height="19" viewBox="0 0 19 19"><circle cx="9.5" cy="9.5" r="9.4" fill="#1f48e8"/><path d="M5.8 5.8 L13.2 13.2 M13.2 5.8 L5.8 13.2" fill="none" stroke="#fff" stroke-width="1.9"/></svg>
<div class="t" style="left:209px;width:100px;text-align:center;top:448.1px;font-size:9px;color:#0a0a0a">4XS</div>
<svg class="a" style="left:296px;top:448.3px" width="10" height="10" viewBox="0 0 10 10"><path d="M0.3 0.2 L5.8 0.2 L8.8 3.2 L8.8 5.3 L7.2 5.3 L5.3 7.2 L5.3 8.6 L0.3 8.6 Z" fill="#e1001a"/><path d="M5.7 0.9 L8.2 3.4" stroke="#fff" stroke-width="0.7"/><path d="M6.6 6.6 L8.8 8.8 M8.8 6.6 L6.6 8.8" stroke="#e1001a" stroke-width="1"/></svg>
<div class="t" style="left:312px;top:448.1px;font-size:9px;font-weight:400;color:#0a0a0a">Variant removed</div>
<div class="t" style="left:457.5px;top:448.1px;font-size:9px;font-weight:400;color:#0a0a0a">-</div>
<div class="t" style="left:551.5px;top:448.1px;font-size:9px;font-weight:400;color:#0a0a0a">-</div>
<svg class="a" style="left:967.4px;top:438.5px" width="19" height="19" viewBox="0 0 19 19"><circle cx="9.5" cy="9.5" r="9.4" fill="#1f48e8"/><path d="M4.6 9.8 L8 13 L14.3 6.3" fill="none" stroke="#fff" stroke-width="1.9"/></svg>
<svg class="a" style="left:990px;top:438.5px" width="19" height="19" viewBox="0 0 19 19"><circle cx="9.5" cy="9.5" r="9.4" fill="#1f48e8"/><path d="M5.8 5.8 L13.2 13.2 M13.2 5.8 L5.8 13.2" fill="none" stroke="#fff" stroke-width="1.9"/></svg>
<svg class="a" style="left:818px;top:587px" width="232" height="68" viewBox="0 0 232 68">
<path d="M7.3 2.5 L179.6 2.5 Q184.6 2.5 184.6 7.5 L184.6 27 L228.7 32.7 L184.6 39.5 L184.6 60.5 Q184.6 65.5 179.6 65.5 L7.3 65.5 Q2.3 65.5 2.3 60.5 L2.3 7.5 Q2.3 2.5 7.3 2.5 Z" fill="#fcf8bf" stroke="#bdb78a" stroke-width="0.9"/>
</svg>
<div class="a" style="left:821px;top:597px;width:181px;text-align:center;font-size:9.3px;line-height:12.2px;color:#111;-webkit-text-stroke:0.2px #111">Enabled only if all changes are either<br>accepted or rejected - only then is<br>possivle to send approval info to<br>supplier.</div>
<div class="t" style="left:1051.5px;top:25px;font-size:15px;font-weight:700;color:#333">Catalog subscription manager</div>
<div class="t" style="left:1053px;top:48.8px;font-size:10px;color:#999">Supplier:</div>
<div class="t" style="left:1053px;top:65.9px;font-size:10px;font-weight:700;color:#222">ABC Lieferant AG</div>
<div class="t" style="left:1053px;top:86px;font-size:10px;color:#999">Catalog:</div>
<div class="t" style="left:1053px;top:102.8px;font-size:10px;font-weight:700;color:#222">Construction worker pants and vests</div>
<div class="t" style="left:1053.5px;top:126.5px;font-size:10.5px;color:#999">Revision to review:</div>
<div class="t" style="left:1053.5px;top:144.3px;font-size:10.8px;font-weight:700;color:#222">V10 (04.03.2024 10:32)</div>
<div class="a" style="left:1053px;top:175px;width:212px;height:23.5px;background:#f2f2f2;border-radius:3px"></div>
<div class="t" style="left:1059px;top:181px;font-size:10.5px;font-style:italic;color:#777">Filter products</div>
<svg class="a" style="left:1240.5px;top:178px" width="17" height="17" viewBox="0 0 17 17"><circle cx="6.5" cy="6.5" r="5.2" fill="none" stroke="#1e3a4c" stroke-width="1.7"/><path d="M10.3 10.3 L15.8 15.8" stroke="#1e3a4c" stroke-width="2.2"/></svg>
<div class="t" style="left:1052.7px;top:218px;font-size:10.5px;color:#999">Change type filter</div>
<div class="a" style="left:1061px;top:238.2px;width:11.6px;height:11.6px;border:1px solid #a8a8a8;border-radius:2.5px;background:#fff"></div>
<svg class="a" style="left:1061px;top:238.2px" width="12" height="12" viewBox="0 0 12 12"><path d="M3 6.6 L5.2 9 L8.8 3.4" fill="none" stroke="#e0001a" stroke-width="1.35"/></svg>
<div class="t" style="left:1079.8px;top:238.0px;font-size:10.6px;color:#222">Show price increases</div>
<div class="a" style="left:1061px;top:258.2px;width:11.6px;height:11.6px;border:1px solid #a8a8a8;border-radius:2.5px;background:#fff"></div>
<svg class="a" style="left:1061px;top:258.2px" width="12" height="12" viewBox="0 0 12 12"><path d="M3 6.6 L5.2 9 L8.8 3.4" fill="none" stroke="#e0001a" stroke-width="1.35"/></svg>
<div class="t" style="left:1079.8px;top:258.1px;font-size:10.6px;color:#222">Show price decreases</div>
<div class="a" style="left:1061px;top:278.3px;width:11.6px;height:11.6px;border:1px solid #a8a8a8;border-radius:2.5px;background:#fff"></div>
<svg class="a" style="left:1061px;top:278.3px" width="12" height="12" viewBox="0 0 12 12"><path d="M3 6.6 L5.2 9 L8.8 3.4" fill="none" stroke="#e0001a" stroke-width="1.35"/></svg>
<div class="t" style="left:1079.8px;top:278.1px;font-size:10.6px;color:#222">Show newly added products</div>
<div class="a" style="left:1061px;top:298.4px;width:11.6px;height:11.6px;border:1px solid #a8a8a8;border-radius:2.5px;background:#fff"></div>
<svg class="a" style="left:1061px;top:298.4px" width="12" height="12" viewBox="0 0 12 12"><path d="M3 6.6 L5.2 9 L8.8 3.4" fill="none" stroke="#e0001a" stroke-width="1.35"/></svg>
<div class="t" style="left:1079.8px;top:298.2px;font-size:10.6px;color:#222">Show removed products</div>
<div class="a" style="left:1061px;top:318.4px;width:11.6px;height:11.6px;border:1px solid #a8a8a8;border-radius:2.5px;background:#fff"></div>
<svg class="a" style="left:1061px;top:318.4px" width="12" height="12" viewBox="0 0 12 12"><path d="M3 6.6 L5.2 9 L8.8 3.4" fill="none" stroke="#e0001a" stroke-width="1.35"/></svg>
<div class="t" style="left:1079.8px;top:318.2px;font-size:10.6px;color:#222">Show products with added variants</div>
<div class="a" style="left:1061px;top:338.4px;width:11.6px;height:11.6px;border:1px solid #a8a8a8;border-radius:2.5px;background:#fff"></div>
<svg class="a" style="left:1061px;top:338.4px" width="12" height="12" viewBox="0 0 12 12"><path d="M3 6.6 L5.2 9 L8.8 3.4" fill="none" stroke="#e0001a" stroke-width="1.35"/></svg>
<div class="t" style="left:1079.8px;top:338.2px;font-size:10.6px;color:#222">Show products with removed variants</div>
<div class="a" style="left:1061px;top:358.5px;width:11.6px;height:11.6px;border:1px solid #a8a8a8;border-radius:2.5px;background:#fff"></div>
<svg class="a" style="left:1061px;top:358.5px" width="12" height="12" viewBox="0 0 12 12"><path d="M3 6.6 L5.2 9 L8.8 3.4" fill="none" stroke="#e0001a" stroke-width="1.35"/></svg>
<div class="t" style="left:1079.8px;top:358.3px;font-size:10.6px;color:#222">Show product base data updates</div>
<div class="a" style="left:1045.6px;top:603.4px;width:222.4px;height:33px;background:#b3b3b3;border-radius:3px"></div>
<div class="a" style="left:1045.6px;top:614.5px;width:222.4px;text-align:center;font-size:9.35px;line-height:10px;color:#fff;-webkit-text-stroke:0.2px #fff">Send approval info to supplier</div>
<div class="a" style="left:1045.6px;top:643.2px;width:222.4px;height:33px;background:#555555;border-radius:3px"></div>
<div class="a" style="left:1045.6px;top:654.2px;width:222.4px;text-align:center;font-size:9.2px;line-height:10px;color:#fff;-webkit-text-stroke:0.2px #fff">Cancel and back</div>
<svg class="a" style="left:72.5px;top:700.5px" width="10" height="10" viewBox="0 0 10 10"><path d="M0.5 0.5 L9.5 9.5 M9.5 0.5 L0.5 9.5" stroke="#333" stroke-width="1.2"/></svg>
<div class="t" style="left:89.4px;top:701px;font-size:10.4px;color:#333;-webkit-text-stroke:0.1px #333">Close app</div>
<div class="t" style="left:626.6px;top:701px;font-size:10.4px;color:#222;-webkit-text-stroke:0.1px #222">B-Op Services | support@b-op.com</div>
<svg class="a" style="left:1213.5px;top:697.5px" width="15" height="15" viewBox="0 0 15 15"><defs><linearGradient id="zt" x1="0" y1="0" x2="1" y2="0"><stop offset="0" stop-color="#dfe12a"/><stop offset="1" stop-color="#8fb52e"/></linearGradient><linearGradient id="zd" x1="0" y1="1" x2="1" y2="0"><stop offset="0" stop-color="#6aaa6a"/><stop offset="1" stop-color="#3d7a3a"/></linearGradient><linearGradient id="zb" x1="0" y1="0" x2="1" y2="0"><stop offset="0" stop-color="#5aa080"/><stop offset="1" stop-color="#1f6080"/></linearGradient></defs><path d="M1.5 1 Q1.5 0.5 2.5 0.5 L13.5 0.5 L13.5 4 L2 4 Z" fill="url(#zt)"/><path d="M7.5 3.6 L13.5 3.6 L7 10 L1 10 Z" fill="url(#zd)"/><path d="M1 9.5 L13.5 9.5 L13.5 13.5 Q13.5 14.5 12.5 14.5 L1 14.5 Z" fill="url(#zb)"/></svg>
<div class="t" style="left:1231.5px;top:698.2px;font-size:13.2px;font-weight:700;color:#fff;transform:scaleX(0.66);transform-origin:left top;letter-spacing:0.3px;-webkit-text-stroke:0.5px #fff">ZUGSEIL</div>
<div class="a" style="left:1278px;top:0;width:1px;height:723px;background:#e2e2e2"></div></body></html>
